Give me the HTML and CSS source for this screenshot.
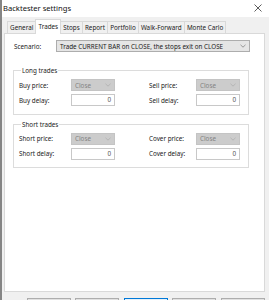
FILE: index.html
```html
<!DOCTYPE html>
<html>
<head>
<meta charset="utf-8">
<link rel="stylesheet" href="styles.css">
</head>
<body>
<div class="window">
  <div class="titlebar">
    <span class="title">Backtester settings</span>
    <svg class="close" width="8" height="8" viewBox="0 0 8 8"><path d="M0.5 0.5 L7.5 7.5 M7.5 0.5 L0.5 7.5" stroke="#333" stroke-width="0.8" fill="none"/></svg>
  </div>
  <div class="content">
    <div class="tabs">
      <div class="tab">General</div>
      <div class="tab active">Trades</div>
      <div class="tab">Stops</div>
      <div class="tab">Report</div>
      <div class="tab">Portfolio</div>
      <div class="tab">Walk-Forward</div>
      <div class="tab">Monte Carlo</div>
    </div>
    <div class="panel">
      <div class="scenario">
        <span class="lbl scen-lbl">Scenario:</span>
        <div class="combo wide">
          <span>Trade CURRENT BAR on CLOSE, the stops exit on CLOSE</span>
          <svg class="chev" width="6" height="4" viewBox="0 0 6 4"><path d="M0.5 0.8 L3 3.2 L5.5 0.8" stroke="#777" stroke-width="0.7" fill="none"/></svg>
        </div>
      </div>
      <fieldset class="group">
        <legend>Long trades</legend>
        <div class="grid">
          <span class="lbl">Buy price:</span>
          <div class="combo dis"><span>Close</span><svg class="chev" width="6" height="4" viewBox="0 0 6 4"><path d="M0.5 0.8 L3 3.2 L5.5 0.8" stroke="#aaa" stroke-width="0.7" fill="none"/></svg></div>
          <span class="lbl right">Sell price:</span>
          <div class="combo dis"><span>Close</span><svg class="chev" width="6" height="4" viewBox="0 0 6 4"><path d="M0.5 0.8 L3 3.2 L5.5 0.8" stroke="#aaa" stroke-width="0.7" fill="none"/></svg></div>
          <span class="lbl">Buy delay:</span>
          <div class="input">0</div>
          <span class="lbl right">Sell delay:</span>
          <div class="input">0</div>
        </div>
      </fieldset>
      <fieldset class="group">
        <legend>Short trades</legend>
        <div class="grid">
          <span class="lbl">Short price:</span>
          <div class="combo dis"><span>Close</span><svg class="chev" width="6" height="4" viewBox="0 0 6 4"><path d="M0.5 0.8 L3 3.2 L5.5 0.8" stroke="#aaa" stroke-width="0.7" fill="none"/></svg></div>
          <span class="lbl right">Cover price:</span>
          <div class="combo dis"><span>Close</span><svg class="chev" width="6" height="4" viewBox="0 0 6 4"><path d="M0.5 0.8 L3 3.2 L5.5 0.8" stroke="#aaa" stroke-width="0.7" fill="none"/></svg></div>
          <span class="lbl">Short delay:</span>
          <div class="input">0</div>
          <span class="lbl right">Cover delay:</span>
          <div class="input">0</div>
        </div>
      </fieldset>
    </div>
    <div class="buttons">
      <div class="btn"></div>
      <div class="btn"></div>
      <div class="btn primary"></div>
      <div class="btn"></div>
      <div class="btn"></div>
    </div>
  </div>
</div>
</body>
</html>
```
FILE: styles.css
```css
html, body {
  margin: 0;
  padding: 0;
}
body {
  width: 269px;
  height: 300px;
  overflow: hidden;
  background: #f0f0f0;
  font-family: "Noto Sans", "Open Sans", sans-serif;
  font-size: 6.3px;
  color: #1a1a1a;
}
.window {
  height: 300px;
  border-left: 2px solid #858585;
  box-sizing: border-box;
  background: #f0f0f0;
}
.titlebar {
  height: 17px;
  background: #ffffff;
  display: flex;
  align-items: center;
  justify-content: space-between;
  padding: 0 7px 2px 1px;
  box-sizing: border-box;
}
.title {
  font-size: 7.6px;
  color: #111;
}
.close {
  display: block;
}
.content {
  padding: 2px 4px 0 2px;
}
.tabs {
  display: flex;
  align-items: flex-end;
  padding-left: 3px;
  height: 14px;
}
.tab {
  height: 12px;
  line-height: 12px;
  padding: 0 2.1px;
  border: 1px solid #d9d9d9;
  border-bottom: none;
  border-right: none;
  background: #f0f0f0;
  color: #1a1a1a;
  box-sizing: border-box;
}
.tab:last-child {
  border-right: 1px solid #d9d9d9;
}
.tab.active {
  background: #ffffff;
  border-right: 1px solid #d9d9d9;
  margin-right: -1px;
  position: relative;
  z-index: 1;
  margin-bottom: -1px;
  height: 15px;
  line-height: 14px;
}
.panel {
  background: #ffffff;
  border: 1px solid #d9d9d9;
  height: 259px;
  box-sizing: border-box;
  padding: 6px 0 0 7px;
}
.lbl {
  color: #1a1a1a;
  white-space: nowrap;
}
.lbl.right {
  padding-left: 34px;
}
.scenario {
  display: flex;
  align-items: center;
  height: 12px;
}
.scen-lbl {
  width: 42px;
  padding-left: 2px;
}
.combo {
  height: 12px;
  box-sizing: border-box;
  border: 1px solid #adadad;
  background: #e5e5e5;
  display: flex;
  align-items: center;
  justify-content: space-between;
  padding: 0 3px 0 3px;
}
.combo.wide {
  width: 194px;
  color: #1a1a1a;
}
.combo.dis {
  background: #cccccc;
  border-color: #c4c4c4;
  color: #838383;
}
.chev {
  display: block;
}
.group {
  margin: 14px 0 0 1px;
  width: 236px;
  box-sizing: border-box;
  border: 1px solid #dcdcdc;
  padding: 4px 8px 7.5px 5px;
}
.group + .group {
  margin-top: 5px;
}
.group legend {
  padding: 0 1px;
  margin-left: 2px;
  color: #1a1a1a;
}
.grid {
  display: grid;
  grid-template-columns: 52px 44px 1fr 44px;
  row-gap: 3px;
  align-items: center;
}
.grid > .combo,
.grid > .input {
  height: 12px;
}
.input {
  box-sizing: border-box;
  border: 1px solid #c8c8c8;
  background: #ffffff;
  text-align: right;
  padding-right: 3px;
  line-height: 10px;
  color: #555;
}
.buttons {
  display: flex;
  justify-content: flex-end;
  gap: 4.6px;
  padding-top: 6px;
  padding-right: 0;
}
.btn {
  width: 44px;
  height: 16px;
  box-sizing: border-box;
  border: 1px solid #adadad;
  background: #e1e1e1;
}
.btn.primary {
  border-color: #0078d7;
  background: #e5f1fb;
}
```
